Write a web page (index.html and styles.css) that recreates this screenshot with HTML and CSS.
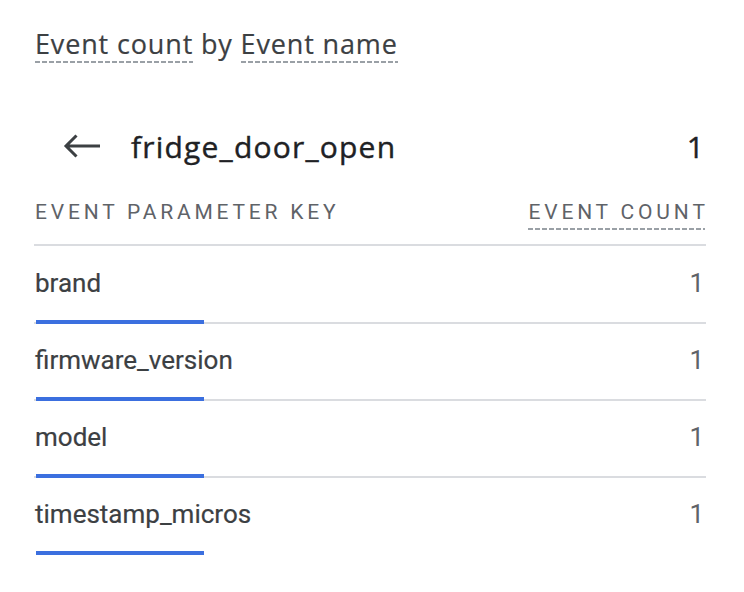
FILE: index.html
```html
<!DOCTYPE html>
<html>
<head>
<meta charset="utf-8">
<link rel="stylesheet" href="styles.css">
</head>
<body>
<div class="card">
  <div class="title"><span class="dashed">Event count</span> by <span class="dashed">Event name</span></div>
  <div class="event-row">
    <svg class="back" width="38" height="24" viewBox="0 0 38 24"><path d="M3 12H37M13.5 1.5L3 12L13.5 22.5" fill="none" stroke="#3c4043" stroke-width="3"/></svg>
    <span class="event-name">fridge_door_open</span>
    <span class="event-count">1</span>
  </div>
  <div class="head">
    <span>EVENT PARAMETER KEY</span>
    <span class="dashed head-count">EVENT COUN<span class="last-char">T</span></span>
  </div>
  <div class="rows">
    <div class="row">
      <div class="line"><span>brand</span><span>1</span></div>
      <div class="track"><div class="bar" style="width:168px"></div></div>
    </div>
    <div class="row">
      <div class="line"><span>firmware_version</span><span>1</span></div>
      <div class="track"><div class="bar" style="width:168px"></div></div>
    </div>
    <div class="row">
      <div class="line"><span>model</span><span>1</span></div>
      <div class="track"><div class="bar" style="width:168px"></div></div>
    </div>
    <div class="row last">
      <div class="line"><span>timestamp_micros</span><span>1</span></div>
      <div class="track"><div class="bar" style="width:168px"></div></div>
    </div>
  </div>
</div>
</body>
</html>
```
FILE: styles.css
```css
html, body {
  margin: 0;
  background: #ffffff;
}
body {
  font-family: Roboto, "Liberation Sans", sans-serif;
  color: #3c4043;
}
.card {
  padding: 25px 38px 0 34px;
}
.title {
  font-family: "Open Sans", Roboto, sans-serif;
  font-size: 27px;
  line-height: 38px;
  height: 38px;
  color: #3c4043;
  padding-left: 1px;
  letter-spacing: 0.85px;
  -webkit-text-stroke: 0.2px #3c4043;
}
.dashed {
  display: inline-block;
  background-image: repeating-linear-gradient(to right, #9aa0a6 0 5px, transparent 5px 7px);
  background-size: 100% 2px;
  background-repeat: no-repeat;
  background-position: left bottom;
}
.title .dashed {
  line-height: 38px;
}
.event-row {
  display: flex;
  align-items: center;
  margin-top: 63px;
  height: 40px;
}
.back {
  margin-left: 29px;
  margin-right: 30px;
  flex: none;
}
.event-name {
  font-family: "Open Sans", Roboto, sans-serif;
  font-size: 30px;
  letter-spacing: 1.2px;
  color: #202124;
  -webkit-text-stroke: 0.4px #202124;
  flex: 1;
}
.event-count {
  font-family: "Open Sans", Roboto, sans-serif;
  font-size: 30px;
  color: #202124;
  -webkit-text-stroke: 0.4px #202124;
  margin-right: 2px;
}
.head {
  display: flex;
  justify-content: space-between;
  align-items: flex-start;
  margin-top: 31px;
  font-size: 21px;
  letter-spacing: 3.8px;
  color: #5f6368;
  padding-left: 1px;
  height: 47px;
  border-bottom: 2px solid #dadce0;
}
.head > span {
  line-height: 30px;
  padding-bottom: 3px;
}
.head-count {
  margin-right: 1px;
}
.last-char {
  letter-spacing: 0;
}
.row {
  padding-top: 20px;
}
.row:first-child {
  padding-top: 21px;
}
.line {
  display: flex;
  justify-content: space-between;
  font-size: 26px;
  line-height: 32px;
  color: #3c4043;
  padding-left: 1px;
  -webkit-text-stroke: 0.2px #3c4043;
}
.line span:last-child {
  color: #5f6368;
  -webkit-text-stroke: 0;
  padding-right: 2px;
}
.track {
  margin-top: 21px;
  height: 4px;
  background: linear-gradient(#dadce0, #dadce0) left bottom / 100% 2px no-repeat;
}
.row.last .track {
  background: none;
}
.bar {
  height: 4px;
  margin-left: 2px;
  background: #3b6fdf;
}
```
